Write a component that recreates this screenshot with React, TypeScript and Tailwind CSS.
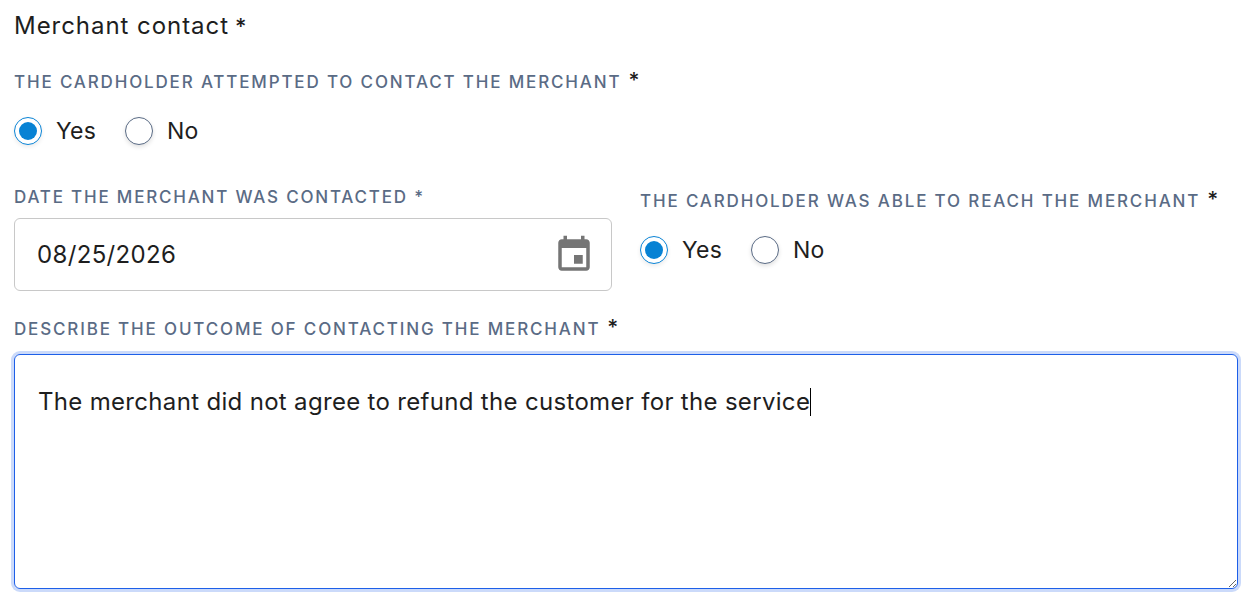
import { FC } from "react";

const FONT = "font-['Inter','Noto_Sans',sans-serif]";

type LabelProps = {
  text: string;
  className?: string;
};

const UpperLabel: FC<LabelProps> = ({ text, className }) => {
  return (
    <div className={`flex items-start whitespace-nowrap ${className ?? ""}`}>
      <span className="text-[17px] leading-[20px] font-medium tracking-[1.84px] text-[#5a6b85]">{text}</span>
      <span className="mt-[-1px] ml-[7px] text-[21px] leading-[20px] font-medium text-[#1e1e1e]">*</span>
    </div>
  );
};

const Radio: FC<{ label: string; checked?: boolean }> = ({ label, checked }) => {
  return (
    <label className="flex items-center gap-[14px]">
      {checked ? (
        <span className="flex h-[28px] w-[28px] items-center justify-center rounded-full border border-[#0a84d6] bg-white shadow-[0_2px_4px_rgba(0,0,0,0.08)]">
          <span className="h-[18px] w-[18px] rounded-full bg-[#0782d4]" />
        </span>
      ) : (
        <span className="h-[28px] w-[28px] rounded-full border border-[#5a6b85] bg-white shadow-[0_2px_4px_rgba(0,0,0,0.12)]" />
      )}
      <span className="text-[23px] leading-[28px] tracking-[0.2px] text-[#1e1e1e]">{label}</span>
    </label>
  );
};

const YesNo: FC = () => {
  return (
    <div className="flex items-center gap-[29px]">
      <Radio label="Yes" checked />
      <Radio label="No" />
    </div>
  );
};

const CalendarIcon: FC = () => {
  return (
    <svg width="42" height="42" viewBox="0 0 24 24" fill="#757575">
      <path d="M17 12h-5v5h5v-5zM16 1v2H8V1H6v2H5c-1.11 0-1.99.9-1.99 2L3 19c0 1.1.89 2 2 2h14c1.1 0 2-.9 2-2V5c0-1.1-.9-2-2-2h-1V1h-2zm3 18H5V8h14v11z" />
    </svg>
  );
};

export default function App() {
  return (
    <div className={`${FONT} h-[608px] w-[1258px] overflow-hidden bg-white pt-[11px] pr-[20px] pl-[14px]`}>
      <div className="flex items-start text-[24px] leading-[30px] tracking-[0.95px] text-[#1e1e1e]">
        Merchant contact <span className="ml-[6px] text-[22px] font-medium">*</span>
      </div>

      <UpperLabel text="THE CARDHOLDER ATTEMPTED TO CONTACT THE MERCHANT" className="mt-[31px]" />
      <div className="mt-[25px]">
        <YesNo />
      </div>

      <div className="mt-[42px] flex gap-[28px]">
        <div className="w-[598px]">
          <div className="flex items-start whitespace-nowrap">
            <span className="text-[17px] leading-[20px] font-medium tracking-[1.8px] text-[#5a6b85]">
              DATE THE MERCHANT WAS CONTACTED *
            </span>
          </div>
          <div className="mt-[11px] flex h-[73px] items-center justify-between rounded-[6px] border border-[#c8c8c8] pr-[16px] pl-[22px]">
            <span className="text-[24px] leading-[30px] tracking-[0.35px] text-[#1e1e1e]">08/25/2026</span>
            <CalendarIcon />
          </div>
        </div>
        <div className="pt-[4px]">
          <UpperLabel text="THE CARDHOLDER WAS ABLE TO REACH THE MERCHANT" />
          <div className="mt-[25px]">
            <YesNo />
          </div>
        </div>
      </div>

      <UpperLabel text="DESCRIBE THE OUTCOME OF CONTACTING THE MERCHANT" className="mt-[28px]" />
      <div className="mt-[15px] h-[235px] w-[1224px] resize overflow-auto rounded-[6px] border border-[#1d5fe8] px-[23px] pt-[31px] text-[24px] leading-[32px] tracking-[0.32px] text-[#1e1e1e] shadow-[0_0_0_3px_#cbdafa]">
        The merchant did not agree to refund the customer for the service
        <span className="inline-block h-[28px] w-px bg-black align-[-6px]" />
      </div>
    </div>
  );
}
